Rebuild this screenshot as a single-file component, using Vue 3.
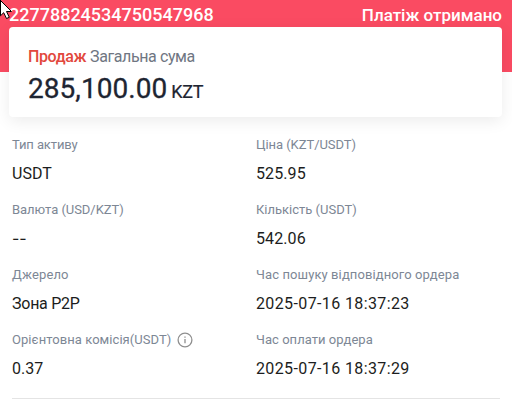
<template>
  <div class="page">
    <header class="banner">
      <span class="order-id">22778824534750547968</span>
      <span class="status">Платіж отримано</span>
    </header>

    <section class="summary">
      <div class="summary-title">
        <span class="side">Продаж</span>
        <span class="caption">Загальна сума</span>
      </div>
      <div class="amount">
        <span class="amount-value">285,100.00</span>
        <span class="amount-unit">KZT</span>
      </div>
    </section>

    <dl class="details">
      <div v-for="item in details" :key="item.label" class="item">
        <dt class="label">
          <span :style="{ letterSpacing: item.labelSpacing + 'px' }">{{ item.label }}</span>
          <svg v-if="item.info" class="info" viewBox="0 0 16 16" width="16" height="16">
            <circle cx="8" cy="8" r="6.9" />
            <path d="M8 7v4.2M8 4.5v1.2" />
          </svg>
        </dt>
        <dd
          class="value"
          :class="{ empty: item.value === '--' }"
          :style="{ letterSpacing: (item.valueSpacing || 0) + 'px' }"
        >{{ item.value }}</dd>
      </div>
    </dl>

    <svg class="cursor" viewBox="0 0 13 20" width="13" height="20">
      <path d="M-3.5 -3.5L11.5 11.5H6.5L9.3 17.3L6.5 18.5L3.7 12.7L0.5 15.8V0.5Z" />
    </svg>
  </div>
</template>

<script setup>
const details = [
  { label: 'Тип активу', value: 'USDT', labelSpacing: -0.1 },
  { label: 'Ціна (KZT/USDT)', value: '525.95', labelSpacing: -0.05, valueSpacing: 0.1 },
  { label: 'Валюта (USD/KZT)', value: '--', labelSpacing: -0.05 },
  { label: 'Кількість (USDT)', value: '542.06', labelSpacing: 0, valueSpacing: 0.1 },
  { label: 'Джерело', value: 'Зона P2P', labelSpacing: 0.15, valueSpacing: -0.25 },
  { label: 'Час пошуку відповідного ордера', value: '2025-07-16 18:37:23', labelSpacing: 0.1, valueSpacing: 0.38 },
  { label: 'Орієнтовна комісія(USDT)', value: '0.37', labelSpacing: 0.06, info: true },
  { label: 'Час оплати ордера', value: '2025-07-16 18:37:29', labelSpacing: 0.04, valueSpacing: 0.38 },
]
</script>

<style>
body {
  margin: 0;
  background: #fff;
  overflow: hidden;
}
</style>

<style scoped>
.page {
  position: relative;
  height: 405px;
  overflow: hidden;
  background: #fff;
  font-family: Roboto, "Noto Sans", sans-serif;
}
.banner {
  display: flex;
  justify-content: space-between;
  box-sizing: border-box;
  height: 72px;
  padding: 4px 10px 0 9px;
  background: #fa4b62;
  color: #fff;
  font-size: 18px;
  line-height: 22px;
}
.order-id {
  font-weight: 500;
}
.status {
  font-size: 17px;
  font-weight: 500;
}
.summary {
  position: relative;
  box-sizing: border-box;
  height: 90px;
  margin: -45px 10px 0 9px;
  padding: 20px 19px 0;
  border-radius: 4px;
  background: #fff;
  box-shadow: 0 4px 16px rgba(0, 0, 0, 0.08);
}
.summary-title {
  display: flex;
  align-items: baseline;
  gap: 4px;
  font-size: 16px;
  line-height: 20px;
  white-space: nowrap;
}
.side {
  color: #e2483d;
  font-weight: 500;
  letter-spacing: -0.4px;
}
.caption {
  color: #6f7682;
  letter-spacing: -0.4px;
}
.amount {
  display: flex;
  align-items: baseline;
  gap: 4px;
  margin-top: 5px;
  color: #1e2532;
  line-height: 34px;
}
.amount-value {
  font-size: 28px;
  font-weight: 400;
  letter-spacing: 0.05px;
  -webkit-text-stroke: 0.3px currentColor;
}
.amount-unit {
  font-size: 18px;
  letter-spacing: -0.3px;
  -webkit-text-stroke: 0.2px currentColor;
}
.details {
  display: grid;
  grid-template-columns: 244px 244px;
  grid-auto-rows: 65px;
  height: 263px;
  margin: 18px 12px 0;
  border-bottom: 1px solid #e4e4e4;
}
.label {
  display: flex;
  align-items: center;
  gap: 6px;
  height: 20px;
  color: #7d8795;
  font-size: 13px;
  line-height: 20px;
  white-space: nowrap;
}
.value {
  margin: 8px 0 0;
  color: #1c1d20;
  font-size: 16px;
  line-height: 22px;
  white-space: nowrap;
}
.empty {
  font-family: Inter, Roboto, sans-serif;
  line-height: 20px;
}
.info {
  fill: none;
  stroke: #8f8f8f;
  stroke-width: 1.3;
}
.cursor {
  position: absolute;
  top: 0;
  left: 0;
  fill: #fff;
  stroke: #000;
  stroke-width: 1;
}
</style>
